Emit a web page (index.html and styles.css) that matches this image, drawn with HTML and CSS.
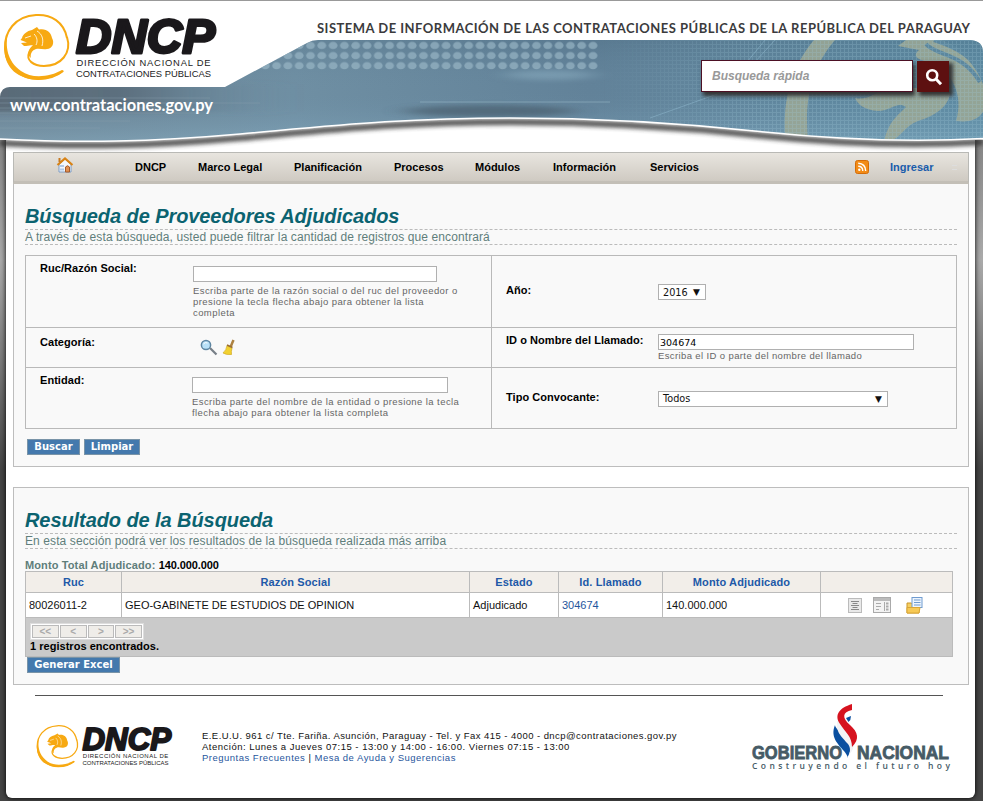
FILE: index.html
```html
<!DOCTYPE html>
<html lang="es">
<head>
<meta charset="utf-8">
<title>DNCP - Proveedores Adjudicados</title>
<link rel="stylesheet" href="styles.css">
</head>
<body>
<svg class="defs" width="0" height="0" aria-hidden="true">
  <symbol id="logo" viewBox="3 14 215 67" overflow="visible">
    <path fill="none" stroke="#f7a912" stroke-width="2" d="M67 38 C64 22 51 14 36 15 C15 16 4 32 5 49 C6 67 21 79 38 79 C49 79 57 76 63 71"/>
    <path fill="#f7a912" d="M8 33 C1 47 4 67 19 75 C33 83 53 80 64 71 L62 70 C50 77 32 79 21 71 C7 61 5 46 8 33Z"/>
    <path fill="none" stroke="#f7a912" stroke-width="2" d="M67 37 C72 53 61 66 44 66 C33 66 26 60 29 53 C30 50 33 49 35 48"/>
    <path fill="#f7a912" d="M22 38 C23 34 27 31 32 30 L37 27 L39 29.500 C46 28 51 32 52 38 C55 43 52 49 47 49 C43 50 40 48 36 49 C32 50 30 54 31 58 C26 54 29 48 33 45.500 C30 44.500 28 46 24 46 L21 43 L27 42.500 L20.500 40Z"/>
    <path fill="none" stroke="#fff" stroke-width=".8" d="M25 38 L31 36 M37 31 C42 34 44 39 42 46 M34 34 C37 37 38 41 36 45"/>
    <text class="logo-name" x="76" y="53" textLength="139" lengthAdjust="spacingAndGlyphs">DNCP</text>
    <text class="logo-sub" x="76.500" y="65.500" textLength="134" lengthAdjust="spacing">DIRECCIÓN NACIONAL DE</text>
    <text class="logo-sub" x="76" y="76.500" textLength="135" lengthAdjust="spacing">CONTRATACIONES PÚBLICAS</text>
  </symbol>
</svg>

<div class="page">
  <header class="banner">
    <svg class="banner-art" width="983" height="152" viewBox="0 0 983 152">
      <defs>
        <linearGradient id="sky" x1="0" x2="1" y1="0" y2="0">
          <stop offset="0" stop-color="#6c8494"/><stop offset=".3" stop-color="#6f8fa3"/>
          <stop offset=".6" stop-color="#628299"/><stop offset="1" stop-color="#5c8aa2"/>
        </linearGradient>
        <linearGradient id="depth" x1="0" x2="0" y1="0" y2="1">
          <stop offset="0" stop-color="#3b5a70" stop-opacity=".2"/><stop offset=".5" stop-color="#6a8da4" stop-opacity="0"/>
          <stop offset="1" stop-color="#9cc6dc" stop-opacity=".35"/>
        </linearGradient>
        <linearGradient id="leftshade" x1="0" x2="1" y1="0" y2="0">
          <stop offset="0" stop-color="#4c5763" stop-opacity=".6"/><stop offset=".5" stop-color="#4c5763" stop-opacity=".5"/><stop offset="1" stop-color="#6a8da4" stop-opacity="0"/>
        </linearGradient>
        <linearGradient id="gridfade" x1="0" x2="1" y1="0" y2="0">
          <stop offset="0" stop-color="#fff" stop-opacity="0"/><stop offset=".4" stop-color="#fff"/>
        </linearGradient>
        <mask id="gridmask"><rect x="600" width="383" height="152" fill="url(#gridfade)"/></mask>
        <pattern id="dots" width="11.300" height="10.100" patternUnits="userSpaceOnUse" x="327.500" y="40.500">
          <ellipse cx="5.600" cy="5" rx="4.400" ry="3.600" fill="#9cb9c8" opacity=".65"/>
        </pattern>
        <pattern id="mesh" width="4" height="4" patternUnits="userSpaceOnUse">
          <path d="M0 .5H4M.5 0V4" stroke="#9fc6d8" stroke-width="1" opacity=".25"/>
        </pattern>
        <filter id="blur" x="-5%" y="-30%" width="110%" height="160%"><feGaussianBlur stdDeviation="2.200"/></filter>
        <filter id="soft" x="-20%" y="-100%" width="140%" height="300%"><feGaussianBlur stdDeviation="12 2.500"/></filter>
        <clipPath id="shape"><path d="M0 139 V97 Q1 87 10 87 H225 L307 43 Q312 40 318 40 H971 Q983 41 983 52 V138.500 Q880 144 760 131.500 C690 124 600 118 510 118 C400 118 330 126 240 134 C150 142 80 143 0 139Z"/></clipPath>
      </defs>
      <path d="M0 141 C80 145 150 144 240 136 C330 128 400 120 510 120 C600 120 690 126 760 133.500 Q880 146 983 140" fill="none" stroke="#333" stroke-width="6" opacity=".85" filter="url(#blur)" transform="translate(0 2)"/>
      <g clip-path="url(#shape)">
        <rect width="983" height="152" fill="url(#sky)"/>
        <rect y="40" width="983" height="104" fill="url(#depth)"/>
        <rect x="-40" y="84" width="330" height="28" fill="url(#leftshade)" filter="url(#soft)"/>
        <path d="M0 98H210M0 103H260M0 108H160M0 113H200M0 121H130M0 128H100" stroke="#8ba0ae" opacity=".4"/>
        <ellipse cx="490" cy="111" rx="85" ry="6" fill="#4d6473" opacity=".8" filter="url(#soft)"/>
        <ellipse cx="550" cy="75" rx="45" ry="5" fill="#8db0c3" opacity=".5" filter="url(#soft)"/>
        <path d="M420 102H610" stroke="#9dbdcc" opacity=".5"/>
        <rect x="260" y="40.500" width="339" height="30.300" fill="url(#dots)"/>
        <path d="M650 118L790 68M747 62L765 40M755 62L775 40" stroke="#9cc6dc" opacity=".4" fill="none"/>
        <g fill="#9da895" opacity=".85">
          <path d="M814 40H835C812 67 804 98 808 140H785C783 99 790 69 814 40Z"/>
          <path d="M898 46L906 40H940C960 47 976 66 983 84V112C976 122 966 122 956 121C964 97 953 69 928 62C915 59 913 55 919 50Z"/>
          <path d="M855 98C867 101 875 92 891 88H950C952 105 935 116 918 121C903 126 900 142 884 142C888 122 898 115 906 107C897 101 891 111 878 111C865 110 858 105 855 98Z"/>
        </g>
        <path d="M926 44C936 56 962 52 980 82M934 40C946 44 965 50 983 72" fill="none" stroke="#5c879e" stroke-width="4"/>
        <rect x="600" y="40" width="383" height="105" fill="url(#mesh)" mask="url(#gridmask)"/>
      </g>
      <path d="M0 139 C80 143 150 142 240 134 C330 126 400 118 510 118 C600 118 690 124 760 131.500 Q880 144 983 138.500" fill="none" stroke="#fff" stroke-width="1.500"/>
      <text class="url" x="10" y="111" textLength="203" lengthAdjust="spacingAndGlyphs">www.contrataciones.gov.py</text>
      <text class="system" x="317" y="33" textLength="653" lengthAdjust="spacing">SISTEMA DE INFORMACIÓN DE LAS CONTRATACIONES PÚBLICAS DE LA REPÚBLICA DEL PARAGUAY</text>
    </svg>
    <svg class="logo-main" width="215" height="67"><use href="#logo"/></svg>
    <form class="search">
      <input class="search-input" type="text" placeholder="Busqueda rápida">
      <button class="search-btn" type="button" aria-label="Buscar"><svg width="18" height="18" viewBox="0 0 18 18" fill="none" stroke="#fff" stroke-width="2.600"><circle cx="7.200" cy="7.200" r="5"/><path d="M11 11L16 16.300" stroke-width="3"/></svg></button>
    </form>
  </header>

  <main class="content">
    <nav class="menu">
      <svg class="home" width="18" height="18" viewBox="0 0 18 18"><path d="M3 8.500L9 3L15 8.500V16H3Z" fill="#f3f7fc" stroke="#7c9cc5"/><path d="M1.500 9L9 2.500L16.500 9" fill="none" stroke="#d98316" stroke-width="2.200"/><path d="M3.500 2V6" stroke="#c77920" stroke-width="2"/><path d="M5 9v2M7 9v2M5 12.500v2M7 12.500v2" stroke="#6e99d2"/><path d="M9.500 16V11Q11.500 8.500 13.500 11V16Z" fill="#e29152" stroke="#a55b2b"/></svg>
      <a>DNCP</a><a>Marco Legal</a><a>Planificación</a><a>Procesos</a><a>Módulos</a><a>Información</a><a>Servicios</a>
      <svg class="rss" width="14" height="14" viewBox="0 0 14 14"><rect x=".5" y=".5" width="13" height="13" rx="2" fill="#f28b16" stroke="#d36c09"/><circle cx="4.300" cy="9.800" r="1.200" fill="#fff"/><path d="M3.200 6.200Q7.600 6.200 7.800 11M3.200 3.300Q10.500 3.600 10.700 11" stroke="#fff" stroke-width="1.400" fill="none"/></svg>
      <a class="login">Ingresar</a>
      <i class="grip"></i>
    </nav>

    <section class="panel panel-form">
      <h1>Búsqueda de Proveedores Adjudicados</h1>
      <p class="lead">A través de esta búsqueda, usted puede filtrar la cantidad de registros que encontrará</p>
      <table class="filters">
        <tr class="r1">
          <td class="top"><div class="field"><label>Ruc/Razón Social:</label><div class="ctl"><input class="in-ruc" type="text"><small>Escriba parte de la razón social o del ruc del proveedor o<br>presione la tecla flecha abajo para obtener la lista<br>completa</small></div></div></td>
          <td><div class="field right"><label>Año:</label><div class="ctl"><div class="sel year"><span>2016</span><b>▼</b></div></div></div></td>
        </tr>
        <tr class="r2">
          <td class="top"><div class="field cat"><label>Categoría:</label><div class="ctl icons">
            <svg width="18" height="17" viewBox="0 0 18 17"><path d="M10 9L16.500 15.500" stroke="#777f87" stroke-width="2.200"/><circle cx="6" cy="6" r="4.600" fill="#b8e1f8" stroke="#5e86a2" stroke-width="1.500"/><path d="M3.500 5Q5 2.700 7.500 4" stroke="#fff" fill="none"/></svg>
            <svg width="14" height="17" viewBox="0 0 14 17"><path d="M11.500 1L8.500 8" stroke="#ad8242" stroke-width="2.500"/><path d="M5 6.500L10 9Q9 13 9.500 15.500Q4 16 1 14Q4.500 11 5 6.500Z" fill="#f2d130" stroke="#d0a81e" stroke-width=".7"/><path d="M5 6L10.500 8.500" stroke="#9a6e33" stroke-width="1.500"/></svg>
          </div></div></td>
          <td class="top"><div class="field right id"><label>ID o Nombre del Llamado:</label><div class="ctl"><input class="in-id" type="text" value="304674"><small>Escriba el ID o parte del nombre del llamado</small></div></div></td>
        </tr>
        <tr class="r3">
          <td class="top"><div class="field ent"><label>Entidad:</label><div class="ctl"><input class="in-ent" type="text"><small>Escriba parte del nombre de la entidad o presione la tecla<br>flecha abajo para obtener la lista completa</small></div></div></td>
          <td><div class="field right"><label>Tipo Convocante:</label><div class="ctl"><div class="sel type"><span>Todos</span><b>▼</b></div></div></div></td>
        </tr>
      </table>
      <div class="actions"><button class="btn b1">Buscar</button><button class="btn b2">Limpiar</button></div>
    </section>

    <section class="panel panel-result">
      <h1>Resultado de la Búsqueda</h1>
      <p class="lead">En esta sección podrá ver los resultados de la búsqueda realizada más arriba</p>
      <p class="total">Monto Total Adjudicado: <b>140.000.000</b></p>
      <table class="results">
        <colgroup><col class="c1"><col class="c2"><col class="c3"><col class="c4"><col class="c5"><col class="c6"></colgroup>
        <tr class="head"><th>Ruc</th><th>Razón Social</th><th>Estado</th><th>Id. Llamado</th><th>Monto Adjudicado</th><th></th></tr>
        <tr class="row"><td>80026011-2</td><td>GEO-GABINETE DE ESTUDIOS DE OPINION</td><td>Adjudicado</td><td><a>304674</a></td><td>140.000.000</td>
          <td><div class="tools">
            <svg width="14" height="15" viewBox="0 0 14 15"><rect x=".5" y=".5" width="13" height="14" fill="#e9e9e9" stroke="#bbb"/><path d="M3 3.500H11M4.500 5.500H9.500M3 7.500H11M4.500 9.500H9.500M3 11.500H11" stroke="#888"/></svg>
            <svg class="t2" width="18" height="16" viewBox="0 0 18 16"><rect x=".5" y=".5" width="17" height="15" fill="#f3f3f3" stroke="#aaa"/><path d="M1 2.500H17" stroke="#bbb" stroke-width="3"/><path d="M3 6.500H8M3 9.500H8M3 12.500H6M11.500 5V14" stroke="#aaa"/><path d="M13 6.500H15.500M13 9.500H15.500M13 12.500H15.500" stroke="#aaa" stroke-width="2"/></svg>
            <svg class="t3" width="17" height="17" viewBox="0 0 17 17"><path d="M1 6H5.500L7 7.500H13V16H1Z" fill="#f6cf62" stroke="#c9962b"/><rect x="6" y=".5" width="10" height="10" fill="#eef5fd" stroke="#6f9bd0"/><path d="M8 3H14.500M8 5.500H14.500M8 8H14.500" stroke="#6f9bd0"/><path d="M1 10.500H14L13 16H1Z" fill="#f7c955" stroke="#d9a636"/></svg>
          </div></td></tr>
        <tr class="foot"><td colspan="6"><div class="pager"><span>&lt;&lt;</span><span>&lt;</span><span>&gt;</span><span>&gt;&gt;</span></div><div class="count">1 registros encontrados.</div></td></tr>
      </table>
      <button class="btn b3">Generar Excel</button>
    </section>
  </main>

  <footer class="footer">
    <svg class="logo-small" width="137" height="43"><use href="#logo"/></svg>
    <div class="contact">
      <div class="l1">E.E.U.U. 961 c/ Tte. Fariña. Asunción, Paraguay - Tel. y Fax 415 - 4000 - dncp@contrataciones.gov.py</div>
      <div class="l2">Atención: Lunes a Jueves 07:15 - 13:00 y 14:00 - 16:00. Viernes 07:15 - 13:00</div>
      <div class="l3"><a>Preguntas Frecuentes</a> | <a>Mesa de Ayuda y Sugerencias</a></div>
    </div>
    <svg class="gov" width="200" height="68" viewBox="0 0 200 68">
      <text class="gov-name" x="1" y="54.500" textLength="90" lengthAdjust="spacingAndGlyphs">GOBIERNO</text>
      <text class="gov-name" x="106" y="54.500" textLength="92" lengthAdjust="spacingAndGlyphs">NACIONAL</text>
      <text class="gov-sub" x="1" y="64.500" textLength="198" lengthAdjust="spacing">Construyendo el futuro hoy</text>
      <path d="M84 21C79 33 87 40 93 47C97 52 97 54 96 54C104 42 97 36 90 29C86 25 84 23 84 21Z" fill="#0a4fa0"/>
      <path d="M87 15C83 27 91 33 97 40C100 44 99 48 98 51C106 42 103 36 96 28C90 22 88 20 87 15Z" fill="#f3f3f5"/>
      <path d="M101 0C88 4 83 11 89 20C94 28 101 32 101 43C109 35 107 28 99 21C91 14 91 8 101 6Z" fill="#d6131f"/>
      <path d="M95 14L100 12Q100 16 97.500 18Z" fill="#0a4fa0"/>
    </svg>
  </footer>
</div>
</body>
</html>
```

FILE: styles.css
```css
* { box-sizing: border-box; }
body { margin: 0; height: 801px; overflow: hidden; font-family: "Liberation Sans", sans-serif; font-size: 11px; color: #111;
  background: linear-gradient(#888 0, #888 150px, #aaa 260px, #444 470px, #444 100%); }
.defs { position: absolute; }
.page { width: 969px; height: 798px; margin-left: 6px; background: #fff; border-radius: 0 0 6px 6px; box-shadow: 0 0 5px #000; }
.logo-name { font: italic bold 48px "Liberation Sans", sans-serif; fill: #1a181b; stroke: #1a181b; stroke-width: 3; stroke-linejoin: round; }
.logo-sub { font: 9.400px "Liberation Sans", sans-serif; fill: #222; }
.banner { position: relative; height: 152px; width: 983px; margin-left: -6px; padding-left: 3px; padding-top: 14px; }
.banner::before { content: ""; position: absolute; left: 0; top: 0; width: 983px; height: 139px; background: #fff; border-top: 1px solid #999; }
.banner-art { position: absolute; left: 0; top: 0; }
.logo-main { position: relative; display: block; overflow: visible; }
.url { font: bold 17px Lato, sans-serif; fill: #fff; }
.system { font: bold 13px Lato, sans-serif; fill: #3b3b3d; }
.search { position: absolute; left: 701px; top: 60px; display: flex; gap: 4px; }
.search-input { width: 212px; height: 32px; border: 1px solid #4c1024; padding: 0 10px; background: #fff; font: italic bold 12px "Liberation Sans", sans-serif; box-shadow: 2px 4px 4px #333; outline: 0; }
.search-input::placeholder { color: #999; opacity: 1; }
.search-btn { width: 32px; height: 31px; margin-top: 1px; border: 0; padding: 3px 0 0 1px; background: #5d1010; box-shadow: 3px 3px 4px 1px #333; }
.content { width: 956px; margin-left: 7px; }
.menu { display: grid; grid-template-columns: 78px 63px 96px 100px 81px 78px 97px 205px 35px 62px 14px; height: 32px; padding-left: 43px; align-items: center; border: 1px solid #b9b9b5; border-bottom: 3px solid #c3bfb7; background: linear-gradient(#e8e5df, #cfcac2); font-weight: bold; color: #000; }
.menu a { white-space: nowrap; }
.home { margin: -5px 0 0 -1px; }
.menu .login { color: #1a5cab; }
.grip { width: 5px; height: 5px; border: 1px solid #ddd; border-width: 1px 0; }
.panel { border: 1px solid #bdbdbd; background: #f9f9f9; padding: 0 11px; }
.panel-form { border-top: 0; height: 283px; padding-top: 20px; }
h1 { margin: 0; height: 25px; font-size: 20px; line-height: 24px; font-style: italic; color: #0b6370; letter-spacing: -.08px; white-space: nowrap; }
.lead { margin: 0; height: 16px; border: 1px dashed #bbb; border-width: 1px 0; font-size: 12px; line-height: 14px; letter-spacing: .1px; color: #5f7e7b; white-space: nowrap; }
.filters { width: 932px; margin-top: 10px; border-collapse: collapse; table-layout: fixed; }
.filters td { border: 1px solid #b9b9b9; padding: 0; }
.filters td:first-child { width: 466px; }
.filters .top { vertical-align: top; }
.r1 { height: 72px; } .r2 { height: 40px; } .r3 { height: 61px; }
.field { display: grid; grid-template-columns: 153px 1fr; padding-left: 14px; }
.field.right { grid-template-columns: 152px 1fr; }
label { font-weight: bold; letter-spacing: .05px; line-height: 14px; padding-top: 5px; color: #000; white-space: nowrap; }
.right label { padding-top: 0; }
.ctl { padding-top: 10px; }
.right .ctl { padding-top: 1px; }
.ctl input { display: block; height: 16px; border: 1px solid #b0b0b0; border-radius: 0; background: #fff; padding: 0 1px; font: 9.500px "DejaVu Sans", sans-serif; }
.in-ruc { width: 244px; } .in-id { width: 256px; } .in-ent { width: 256px; }
small { display: block; margin-top: 3px; font-size: 9.500px; line-height: 11px; letter-spacing: .42px; color: #666; white-space: nowrap; }
.field.id { padding-top: 6px; }
.id label { margin-top: -1px; }
.id .ctl { padding-top: 0; }
.id small { margin-top: 0; letter-spacing: .38px; }
.field.ent { grid-template-columns: 152px 1fr; }
.ent .ctl { padding-top: 9px; }
.cat label { padding-top: 7px; }
.cat .icons { display: flex; gap: 4px; padding: 11px 0 0 7px; }
.sel { display: flex; justify-content: space-between; align-items: center; height: 16px; border: 1px solid #b0b0b0; background: #fff; padding: 0 5px 0 4px; font: 9.700px "DejaVu Sans", sans-serif; color: #111; }
.sel b { font: 9px "DejaVu Sans", sans-serif; }
.year { width: 48px; } .type { width: 230px; }
.actions { display: flex; gap: 4px; padding: 10px 0 0 2px; }
.btn { display: block; height: 16px; padding: 0; border: 1px solid #7994a8; background: #4479ad; color: #fff; font: bold 10px/12px "DejaVu Sans", sans-serif; }
.b1 { width: 53px; } .b2 { width: 56px; } .b3 { width: 93px; margin-left: 2px; }
.panel-result { margin-top: 20px; height: 198px; padding-top: 20px; }
.total { margin: 9px 0 0; height: 13px; line-height: 14px; font-weight: bold; color: #5f7e7b; letter-spacing: .12px; }
.total b { color: #000; letter-spacing: -.1px; }
.results { width: 928px; border-collapse: collapse; table-layout: fixed; }
.results td, .results th { border: 1px solid #bbb; padding: 0 3px; }
.c1 { width: 96px; } .c2 { width: 348px; } .c3 { width: 89px; } .c4 { width: 104px; } .c5 { width: 158px; } .c6 { width: 132px; }
.head { height: 21px; background: #f2eee9; color: #2159a8; letter-spacing: .12px; }
.row { height: 25px; background: #fff; }
.row a, .contact a { color: #1f569d; }
.tools { display: flex; align-items: center; padding-left: 24px; }
.t2 { margin-left: 11px; } .t3 { margin-left: 15px; }
.foot { height: 39px; background: #cacaca; }
.results .foot td { padding: 5px 4px 0; vertical-align: top; }
.pager { display: flex; gap: 1px; width: 114px; height: 17px; padding: 1px; border: 1px solid #ddd; background: #fff; }
.pager span { flex: 1; border: 1px solid #bbb; background: #efede9; color: #aaa; font-weight: bold; font-size: 10px; line-height: 12px; text-align: center; }
.count { font-weight: bold; line-height: 13px; letter-spacing: .03px; color: #000; }
.footer { display: flex; width: 908px; margin: 10px 0 0 29px; border-top: 1px solid #555; }
.logo-small { margin: 29px 0 0 1px; flex: none; overflow: visible; }
.contact { flex: 1; padding-top: 34px; margin-left: 29px; font-size: 9.500px; line-height: 11px; letter-spacing: .44px; color: #111; white-space: nowrap; }
.l2 { letter-spacing: .5px; }
.l3 { letter-spacing: .49px; }
.gov { flex: none; margin: 8px -8px 0 0; overflow: visible; }
.gov-name { font: bold 18px "Liberation Sans", sans-serif; fill: #465b66; stroke: #465b66; stroke-width: .8; }
.gov-sub { font: 600 8.500px "Open Sans", sans-serif; fill: #465b66; }
```
